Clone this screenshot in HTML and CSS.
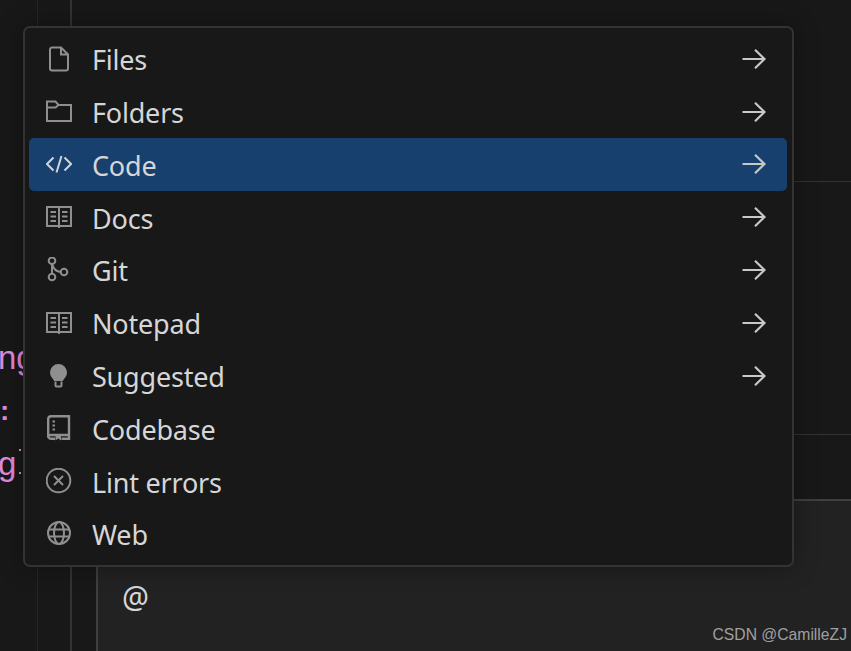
FILE: index.html
```html
<!DOCTYPE html>
<html lang="en">
<head>
    <meta charset="UTF-8">
    <meta name="viewport" content="width=device-width, initial-scale=1.0">
    <title>Mention menu</title>
    <link rel="stylesheet" href="styles.css">
</head>
<body>
    <svg class="defs" width="0" height="0">
        <symbol id="arrow" viewBox="0 0 24 24">
            <path d="M0.5 12H22.5M13 2.8L22.5 12L13 21.2"/>
        </symbol>
        <symbol id="book" viewBox="0 0 26 26">
            <path d="M1 3H25V22H1ZM13 3V24"/>
            <path d="M4.5 8H10M4.5 12.5H10M4.5 17H10M16 8H21.5M16 12.5H21.5M16 17H21.5"/>
        </symbol>
    </svg>

    <div class="workbench">
        <div class="gutter">
            <div class="code">
                <div class="code-line">ng</div>
                <div class="code-line code-colon">:</div>
                <div class="code-line">g<span class="code-tick"></span></div>
            </div>
        </div>
        <div class="tree"></div>
        <div class="editor">
            <div class="pane pane-top"></div>
            <div class="pane pane-middle"></div>
            <div class="pane pane-bottom"></div>
            <div class="composer">@</div>
        </div>
    </div>

    <ul class="menu">
        <li class="menu-item">
            <svg class="icon" viewBox="0 0 26 26"><path d="M6 1.5H15L22 8.5V22.5A2 2 0 0 1 20 24.5H6A2 2 0 0 1 4 22.5V3.5A2 2 0 0 1 6 1.5ZM15 1.5V8.5H22"/></svg>
            <span class="label">Files</span>
            <svg class="arrow"><use href="#arrow"/></svg>
        </li>
        <li class="menu-item">
            <svg class="icon" viewBox="0 0 26 26"><path d="M1 2.5H9.5L12.5 6H25V22H1ZM1 8.5H9.5L12.5 6"/></svg>
            <span class="label">Folders</span>
            <svg class="arrow"><use href="#arrow"/></svg>
        </li>
        <li class="menu-item active">
            <svg class="icon" viewBox="0 0 26 26"><path d="M7.5 6.5L1 13L7.5 19.5M18.5 6.5L25 13L18.5 19.5M15.5 5L10.5 21.5"/></svg>
            <span class="label">Code</span>
            <svg class="arrow"><use href="#arrow"/></svg>
        </li>
        <li class="menu-item">
            <svg class="icon"><use href="#book"/></svg>
            <span class="label">Docs</span>
            <svg class="arrow"><use href="#arrow"/></svg>
        </li>
        <li class="menu-item">
            <svg class="icon" viewBox="0 0 26 26"><circle cx="6" cy="3.8" r="3.3"/><circle cx="6" cy="20" r="3.3"/><circle cx="18" cy="15" r="3.3"/><path d="M6 7V16.7M6.5 8C7.5 12 10.5 14.5 14.7 15"/></svg>
            <span class="label">Git</span>
            <svg class="arrow"><use href="#arrow"/></svg>
        </li>
        <li class="menu-item">
            <svg class="icon"><use href="#book"/></svg>
            <span class="label">Notepad</span>
            <svg class="arrow"><use href="#arrow"/></svg>
        </li>
        <li class="menu-item">
            <svg class="icon" viewBox="0 0 26 26"><path class="solid" d="M12.5 1A8.5 8.5 0 0 1 21 9.5C21 13 18.5 15 17 17.5V18H8V17.5C6.5 15 4 13 4 9.5A8.5 8.5 0 0 1 12.5 1Z"/><path d="M9.5 18.5V22.5A1 1 0 0 0 10.5 23.5H14.5A1 1 0 0 0 15.5 22.5V18.5"/></svg>
            <span class="label">Suggested</span>
            <svg class="arrow"><use href="#arrow"/></svg>
        </li>
        <li class="menu-item">
            <svg class="icon" viewBox="0 0 26 26"><path class="heavy" d="M5 1.2H23V20H5A2.5 2.5 0 0 0 2.2 22.5V4A3 3 0 0 1 5 1.2ZM2.2 21A3 3 0 0 0 5.5 23.8H9M15.5 23.8H23V20"/><path class="solid" d="M9.5 20H15V25.5L12.2 23.5L9.5 25.5ZM6.5 5.5H9V7.5H6.5ZM6.5 9.5H9V11.5H6.5ZM6.5 13.5H9V15.5H6.5Z"/></svg>
            <span class="label">Codebase</span>
        </li>
        <li class="menu-item">
            <svg class="icon" viewBox="0 0 26 26"><circle cx="12.5" cy="12.5" r="11.8"/><path d="M8 8L17 17M17 8L8 17"/></svg>
            <span class="label">Lint errors</span>
        </li>
        <li class="menu-item">
            <svg class="icon" viewBox="0 0 26 26"><circle cx="13" cy="12" r="11"/><ellipse cx="13" cy="12" rx="5" ry="11"/><path d="M2.5 8.5H23.5M2.5 15.5H23.5"/></svg>
            <span class="label">Web</span>
        </li>
    </ul>

    <div class="watermark">CSDN @CamilleZJ</div>
</body>
</html>
```

FILE: styles.css
```css
:root {
    --bg-color: #181818;
    --composer-color: #222222;
    --line-color: #333333;
    --line-strong-color: #3f3f3f;
    --line-faint-color: #262626;
    --icon-color: #8f8f8f;
    --text-color: #d6d6d6;
    --active-color: #18406f;
    --pink-color: #e08adf;
}

* { box-sizing: border-box; }

body {
    margin: 0;
    height: 651px;
    overflow: hidden;
    background-color: var(--bg-color);
    font-family: 'Noto Sans', sans-serif;
}

.defs { display: block; }

.workbench {
    display: flex;
    height: 651px;
}

.gutter {
    width: 38px;
    border-right: 1px solid var(--line-faint-color);
}

.code {
    width: 23px;
    padding-top: 331px;
    overflow: hidden;
    color: var(--pink-color);
    font-family: 'Liberation Sans', sans-serif;
    font-size: 33px;
}

.code-line {
    display: flex;
    height: 53px;
    margin-left: -2px;
    line-height: 53px;
    white-space: nowrap;
}
.code-colon { margin-left: 0; font-size: 28px; font-weight: bold; }

/* only the tips of this bracket stick out from under the menu */
.code-tick {
    width: 2px;
    height: 25px;
    margin: 12px 0 0 3px;
    border-top: 2px solid var(--pink-color);
    border-bottom: 2px solid var(--pink-color);
}

.tree {
    width: 34px;
    border-right: 2px solid var(--line-color);
}

.editor {
    flex: 1;
    display: flex;
    flex-direction: column;
}

.pane { border-bottom: 2px solid var(--line-color); }
.pane-top { height: 182px; border-bottom-width: 1px; }
.pane-middle { height: 253px; border-bottom-width: 1px; }
.pane-bottom { height: 66px; border-bottom-color: var(--line-strong-color); }

.composer {
    flex: 1;
    margin-left: 24px;
    padding: 76px 0 0 24px;
    border-left: 2px solid var(--line-strong-color);
    background-color: var(--composer-color);
    color: var(--text-color);
    font-size: 30px;
    line-height: 40px;
}

.menu {
    position: absolute;
    left: 23px;
    top: 26px;
    width: 771px;
    height: 541px;
    margin: 0;
    padding: 4.4px 5px 0 4px;
    list-style: none;
    background-color: var(--bg-color);
    border: 2px solid var(--line-color);
    border-radius: 7px;
    box-shadow: 0 0 24px rgba(0, 0, 0, 0.35);
}

.menu-item {
    display: flex;
    align-items: center;
    height: 52.8px;
    padding: 0 21px 0 17px;
    border-radius: 5px;
    color: var(--text-color);
}
.menu-item.active { background-color: var(--active-color); }

.icon {
    width: 26px;
    height: 26px;
    flex-shrink: 0;
    fill: none;
    stroke: var(--icon-color);
    stroke-width: 2;
}
.icon .solid { fill: var(--icon-color); stroke: none; }
.icon .heavy { stroke-width: 2.4; }
.active .icon { stroke: #cfd4da; }

.label {
    flex: 1;
    margin-left: 20px;
    padding-top: 3px;
    font-size: 27px;
    letter-spacing: -0.2px;
    line-height: 36px;
}

.arrow {
    width: 24px;
    height: 24px;
    fill: none;
    stroke: #c8c8c8;
    stroke-width: 2.2;
}

.watermark {
    position: absolute;
    right: 4px;
    bottom: 7px;
    color: #a0a0a0;
    font-family: 'Liberation Sans', sans-serif;
    font-size: 15.7px;
}
```
